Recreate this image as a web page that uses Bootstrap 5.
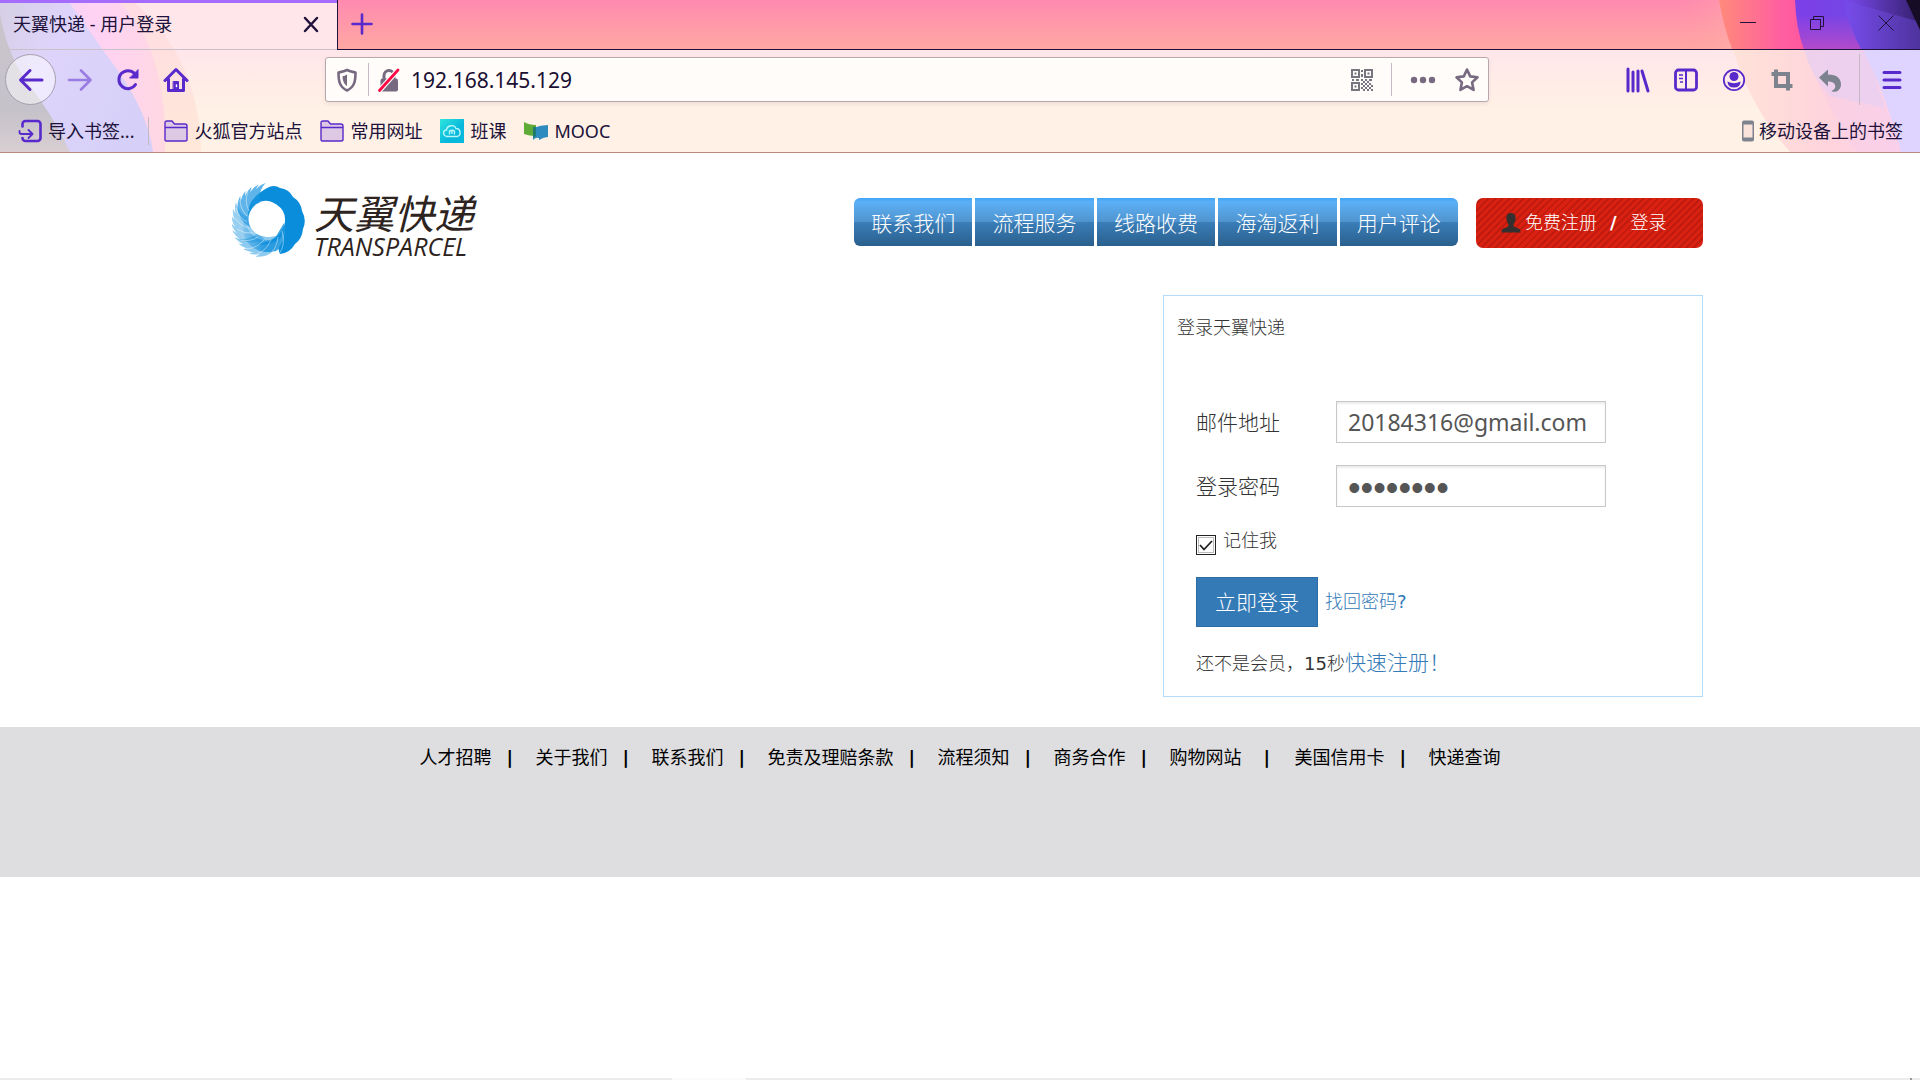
<!DOCTYPE html>
<html lang="zh-CN">
<head>
<meta charset="utf-8">
<meta name="viewport" content="width=device-width, initial-scale=1">
<title>天翼快递 - 用户登录</title>
<link href="https://cdn.jsdelivr.net/npm/bootstrap@5.3.0/dist/css/bootstrap.min.css" rel="stylesheet">
<style>
body{font-family:"DejaVu Sans","Noto Sans CJK SC",sans-serif;font-size:18px;line-height:26px;color:#333;background:#fff}
a{text-decoration:none}
svg{display:block;flex:none}
/* browser chrome */
.browser{font-family:"Noto Sans","Noto Sans CJK SC",sans-serif;color:#20123a;background:linear-gradient(#ffe6ea 50px,#fff1e5 110px);border-bottom:1px solid #b98a7c;overflow:hidden}
.browser button{background:none;border:0;padding:0;color:#592acb}
.browser a{color:#20123a}
.theme-left{left:0;top:0}
.theme-right{right:0;top:0}
.tab-row{height:50px}
.tab-strip{background:linear-gradient(#ff8ab0,#ffa8a2);border-bottom:1px solid #20123a;border-left:1px solid #20123a}
.tab-active{width:337px;border-top:3px solid #a66cff;border-bottom:1px solid #c9c0c9;padding:0 17px 4px 13px}
.btn-new{width:50px;height:48px}
.win-btn{width:69px}
.browser .win-btn,.browser .tab-close{color:#20123a}
.tool-row{height:59px}
.tool-left{width:325px;padding-left:5px}
.tool-right{width:431px;padding-right:4px}
.tool-btn{width:48px;height:48px;display:flex;align-items:center;justify-content:center}
.browser .btn-back{width:51px;height:51px;border:1px solid #a79fae;border-radius:50%;background:rgba(255,255,255,.5);display:flex;align-items:center;justify-content:center}
.url-bar{height:45px;background:#fffcfa;border:1px solid #b6a8ae;border-radius:3px;box-shadow:0 2px 4px rgba(0,0,0,.07);padding:0 8px 0 10px}
.url-bar input{font-size:21px;line-height:28px;border:0;background:none;padding:0 0 0 2px;color:#1a0f33;outline:0;min-width:0}
.v-line{width:1px;background:#c4b9c5}
.mark-row{height:43px;padding:0 17px 0 18px}
.mark-row a{display:flex;align-items:center;gap:6px}
/* site */
.site{max-width:1486px;width:100%}
.site-head{padding:30px 0 36px 15px}
.site-logo{gap:8px;height:76px;padding-top:8px;color:#2d2320}
.site-logo svg{margin-top:-8px}
.logo-cn{font:italic 400 40px/42px "Noto Sans CJK SC",sans-serif}
.logo-en{font:italic 500 25px/26px "Open Sans",sans-serif}
.site-nav{padding-top:15px}
.nav-group{gap:3px;width:604px}
.nav-tile{flex:1;height:48px;font-size:21px;line-height:52px;text-align:center;color:#fff;background:linear-gradient(#3fa5f8,#5cb0f7 8%,#5094ce 49%,#3a7db8 51%,#2a608d);font-weight:300}
.nav-tile:first-child{border-radius:6px 0 0 6px}
.nav-tile:last-child{border-radius:0 6px 6px 0}
.user-box{width:227px;height:50px;margin-left:18px;padding-left:25px;border-radius:7px;background:repeating-linear-gradient(135deg,#da2010 0 3px,#bf1b0e 3px 5px);color:#fff;font-weight:300}
.user-box a{color:#fff}
.user-sep{padding:0 14px 0 13px;font-weight:700}
.login-panel{width:540px;border:1px solid #b4dcfa}
.login-title{font-size:18px;line-height:26px;font-weight:300;padding:19px 13px 0;margin:0 0 60px}
.login-form{padding:0 32px 18px;font-weight:300}
.field-label{width:140px;font-size:21px;line-height:28px;padding-top:2px}
.field-box{width:270px;height:42px;border:1px solid #c8c8c8;border-radius:0;box-shadow:inset 0 2px 2px rgba(0,0,0,.08);padding:0 11px;color:#555}
.field-mail{font-family:"Noto Sans",sans-serif;font-size:23px}
.field-pass{font-family:"Liberation Sans",sans-serif;font-size:36px;line-height:36px;padding-top:4px}
.row-gap{margin-bottom:22px}
.remember{height:24px;margin:24px 0 22px;gap:7px}
.remember label{line-height:20px}
.remember input{appearance:none;width:20px;height:20px;margin:0;border:1px solid #222;align-self:end;background:url("data:image/svg+xml,%3Csvg xmlns='http://www.w3.org/2000/svg' viewBox='0 0 18 18'%3E%3Crect x='1.5' y='1.5' width='15' height='15' fill='none' stroke='%23777' stroke-dasharray='1 1'/%3E%3Cpath d='M3 9l4 4.500 8-8.500' fill='none' stroke='%23222' stroke-width='1.800'/%3E%3C/svg%3E") center/100% 100%}
.btn-login{width:122px;height:50px;border:1px solid #2e6da4;border-radius:0;background:#337ab7;color:#fff;font-size:21px;font-weight:300;padding:2px 0 0}
.site a.blue-link{color:#337ab7}
.quick{line-height:28px}
.quick a{font-size:21px}
.site-foot{height:150px;margin-top:30px;padding-top:18px;background:#dedee0}
.site-foot a{color:#000}
.foot-sep{width:44px;padding-left:15px;color:#000;font-weight:700}
.foot-wide{padding-left:22px;width:53px}
.edge-bar{height:2px;background:#ececec}
.edge-gap{width:74px;background:#fbfbfb}
.edge-tick{width:2px;background:#999}
</style>
<script src="https://cdn.jsdelivr.net/npm/bootstrap@5.3.0/dist/js/bootstrap.bundle.min.js"></script>
</head>
<body class="d-flex flex-column min-vh-100">
<header class="browser position-relative">
  <div class="tab-row d-flex position-relative">
    <div class="flex-shrink-0" style="width:337px"></div>
    <div class="tab-strip flex-grow-1"></div>
  </div>
  <svg class="theme-left position-absolute" width="210" height="152" viewBox="0 0 210 152" aria-hidden="true">
    <defs>
      <linearGradient id="gl" x1="0" y1="0" x2="0" y2="1"><stop offset="0" stop-color="#cbc5cd"/><stop offset=".7" stop-color="#c5c2c9"/><stop offset="1" stop-color="#d9cfd3"/></linearGradient>
      <linearGradient id="lv" x1="0" y1="0" x2="1" y2=".5"><stop offset="0" stop-color="#d5cfe4"/><stop offset=".4" stop-color="#ded4fb"/><stop offset="1" stop-color="#d6d0f8"/></linearGradient>
      <linearGradient id="pk" x1="0" y1="0" x2="1" y2="0"><stop offset="0" stop-color="#ecd2f4"/><stop offset=".6" stop-color="#ffd2f3"/><stop offset="1" stop-color="#ffd8e2"/></linearGradient>
      <linearGradient id="pc" x1="0" y1="0" x2="0" y2="1"><stop offset="0" stop-color="#ffdce2"/><stop offset="1" stop-color="#ffe8d8"/></linearGradient>
    </defs>
    <path d="M0 3H135Q200 60 201 152H0z" fill="url(#pc)"/>
    <path d="M0 3H120Q168 50 165 152H0z" fill="url(#pk)"/>
    <path d="M0 3H70L105 53Q148 108 153 152H0z" fill="url(#lv)"/>
    <path d="M0 14Q8 58 30 86T70 152H0z" fill="url(#gl)"/>
  </svg>
  <svg class="theme-right position-absolute" width="240" height="152" viewBox="0 0 240 152" aria-hidden="true">
    <defs>
      <linearGradient id="r1"><stop offset="0" stop-color="#ff8a7a"/><stop offset=".3" stop-color="#ff60a0"/><stop offset=".6" stop-color="#ff4a9c"/></linearGradient>
      <linearGradient id="r2"><stop offset="0" stop-color="#7d3fe8"/><stop offset=".45" stop-color="#7446e4"/><stop offset="1" stop-color="#35206c"/></linearGradient>
      <linearGradient id="r3" x1="0" y1="0" x2="0" y2="1"><stop offset=".3" stop-color="#b24acc" stop-opacity="0"/><stop offset="1" stop-color="#b24acc"/></linearGradient>
      <linearGradient id="r4"><stop offset="0" stop-color="#ffe2d8"/><stop offset=".5" stop-color="#ffd4dc"/><stop offset="1" stop-color="#fcd0ee"/></linearGradient>
      <linearGradient id="r5"><stop offset="0" stop-color="#ff9aa4" stop-opacity="0"/><stop offset="1" stop-color="#ffb0a8"/></linearGradient>
    </defs>
    <path d="M0 0H45L56 49H0z" fill="url(#r5)" opacity=".5"/>
    <path d="M39 0Q44 28 52 49H240V0z" fill="url(#r1)"/>
    <path d="M115 0Q116 28 124 49H240V0z" fill="url(#r2)"/>
    <path d="M115 0Q116 28 124 49H181Q171 30 163 0z" fill="url(#r3)"/>
    <path d="M163 0Q168 30 181 49H240V22z" fill="#7550e8" opacity=".4"/>
    <path d="M226 0L240 30V0z" fill="#160c26"/>
    <path d="M53 50Q72 110 110 152H240V50z" fill="url(#r4)"/>
    <path d="M124 50Q145 105 176 152H221L186 50z" fill="#f4cdec" opacity=".4"/>
    <path d="M124 50Q132 78 150 96L205 108L186 50z" fill="#e0cff8" opacity=".5"/>
    <path d="M183 50Q206 95 221 152H240V50z" fill="#dfd4ff"/>
    <path d="M0 49.500H240" stroke="#20123a"/>
  </svg>
  <div class="position-absolute top-0 start-0 w-100 tab-row d-flex">
    <div class="tab-active d-flex align-items-center flex-shrink-0">
      <a href="#" class="flex-grow-1">天翼快递 - 用户登录</a>
      <button type="button" class="tab-close" aria-label="关闭标签页"><svg width="18" height="18" viewBox="0 0 18 18" fill="none" stroke="currentColor" stroke-width="2.500" stroke-linecap="round"><path d="M3 3l12 13M15 3L3 16"/></svg></button>
    </div>
    <button type="button" class="btn-new d-flex align-items-center justify-content-center" aria-label="新标签页"><svg width="22" height="22" viewBox="0 0 22 22" stroke="currentColor" stroke-width="2.600" stroke-linecap="round"><path d="M11 1.500v19M1.500 11h19"/></svg></button>
    <div class="ms-auto d-flex h-100 pb-1">
      <button type="button" class="win-btn d-flex align-items-center justify-content-center" aria-label="最小化"><svg width="16" height="16" viewBox="0 0 16 16" stroke="currentColor"><path d="M0 7.500h16"/></svg></button>
      <button type="button" class="win-btn d-flex align-items-center justify-content-center" aria-label="还原"><svg width="16" height="16" viewBox="0 0 16 16" fill="none" stroke="currentColor"><path d="M1.500 4.500h10v10h-10zM4.500 4.500v-3h10v10h-3"/></svg></button>
      <button type="button" class="win-btn d-flex align-items-center justify-content-center" aria-label="关闭"><svg width="16" height="16" viewBox="0 0 16 16" stroke="currentColor"><path d="M.5.500l15 15M15.500.500l-15 15"/></svg></button>
    </div>
  </div>
  <div class="tool-row d-flex align-items-center position-relative">
    <div class="tool-left d-flex align-items-center flex-shrink-0">
      <button type="button" class="btn-back" aria-label="后退"><svg width="26" height="24" viewBox="0 0 26 24" fill="none" stroke="currentColor" stroke-width="3" stroke-linecap="round" stroke-linejoin="round"><path d="M24 12H3M12 2.500L2.500 12l9.500 9.500"/></svg></button>
      <button type="button" class="tool-btn opacity-50" aria-label="前进"><svg width="26" height="24" viewBox="0 0 26 24" fill="none" stroke="currentColor" stroke-width="2.600" stroke-linecap="round" stroke-linejoin="round"><path d="M2 12h21M14 2.500L23.500 12 14 21.500"/></svg></button>
      <button type="button" class="tool-btn" aria-label="刷新"><svg width="24" height="24" viewBox="0 0 24 24" fill="none" stroke="currentColor" stroke-width="3" stroke-linecap="round"><path d="M19.500 16.500A9 9 0 1 1 18.500 5.500"/><path d="M22 2v8h-8z" fill="currentColor" stroke-width="1" stroke-linejoin="round"/></svg></button>
      <button type="button" class="tool-btn" aria-label="主页"><svg width="26" height="26" viewBox="0 0 26 26" fill="none" stroke="currentColor" stroke-width="3" stroke-linecap="round" stroke-linejoin="round"><path d="M2 13.500L13 2.500l11 11M5.500 12v11.500h15V12"/><path d="M10.500 14.500h5v8.500h-5z" fill="currentColor" stroke-width="1"/><path d="M13.500 18v1.500" stroke="#fff" stroke-width="1.500"/></svg></button>
    </div>
    <div class="url-bar d-flex align-items-center flex-grow-1">
      <svg width="22" height="24" viewBox="0 0 22 24" fill="none" stroke="#77697f" stroke-width="2.600" stroke-linejoin="round"><path d="M11 2C8 3.500 5 4 2.500 4.500 2.500 13 3.500 19 11 22.500 18.500 19 19.500 13 19.500 4.500 17 4 14 3.500 11 2z"/><path d="M11 6.500C9.500 7.500 8 8 6.500 8.200 6.800 12.500 7.500 15.500 11 18z" fill="#77697f" stroke="none"/></svg>
      <div class="v-line me-2 h-75" style="margin-left:10px"></div>
      <svg width="24" height="24" viewBox="0 0 22 24"><path d="M6 11V7.500a5 5 0 0 1 10 0V11" fill="none" stroke="#77697f" stroke-width="3"/><rect x="2.500" y="10.500" width="17.500" height="13" rx="2" fill="#77697f"/><path d="M2 22L20 2" stroke="#fff" stroke-width="5"/><path d="M1.500 22.500L20 2" stroke="#ff0a45" stroke-width="2.800" stroke-linecap="round"/></svg>
      <input class="flex-grow-1 ms-2" type="text" aria-label="网址" value="192.168.145.129">
      <button type="button" aria-label="二维码"><svg width="22" height="22" viewBox="0 0 22 22" fill="#77757f"><path fill-rule="evenodd" d="M0 0h9v9H0zM2 2v5h5V2zM13 0h9v9h-9zM15 2v5h5V2zM0 13h9v9H0zM2 15v5h5v-5z"/><path d="M3.500 3.500h2v2h-2zM16.500 3.500h2v2h-2zM3.500 16.500h2v2h-2zM10 1h2v2h-2zM10 5h2v3h-2zM1 10h2v2H1zM5 10h3v2H5zM10 10h2v2h-2zM14 10h2v2h-2zM18 10h3v2h-3zM12 12h2v2h-2zM16 12h2v2h-2zM10 14h2v2h-2zM14 14h2v2h-2zM18 14h2v2h-2zM12 16h2v2h-2zM16 16h2v2h-2zM20 16h2v2h-2zM10 18h2v2h-2zM14 18h2v2h-2zM18 18h2v2h-2zM12 20h2v2h-2zM16 20h2v2h-2zM20 20h2v2h-2z"/></svg></button>
      <div class="v-line h-75" style="margin:0 18px"></div>
      <button type="button" style="margin-right:18px" aria-label="页面操作"><svg width="26" height="8" viewBox="0 0 26 8" fill="#77697f"><circle cx="4" cy="4" r="3.200"/><circle cx="13" cy="4" r="3.200"/><circle cx="22" cy="4" r="3.200"/></svg></button>
      <button type="button" aria-label="收藏"><svg width="26" height="26" viewBox="0 0 26 26" fill="none" stroke="#77697f" stroke-width="2.600" stroke-linejoin="round"><path d="M13 2.500l3.200 6.900 7.300.900-5.400 5.100 1.500 7.500-6.600-3.700-6.600 3.700 1.500-7.500-5.400-5.100 7.300-.9z"/></svg></button>
    </div>
    <div class="tool-right d-flex align-items-center justify-content-end flex-shrink-0">
      <button type="button" class="tool-btn" aria-label="书库"><svg width="24" height="26" viewBox="0 0 24 26" stroke="currentColor" stroke-width="3" stroke-linecap="round"><path d="M2 2v22M7 5v19M12 4v20M16 4l6 20"/></svg></button>
      <button type="button" class="tool-btn" aria-label="侧栏"><svg width="24" height="24" viewBox="0 0 24 24" fill="none" stroke="currentColor" stroke-width="2.800"><rect x="1.500" y="2" width="21" height="20" rx="3"/><path d="M12 2v20" stroke-width="2"/><path d="M5 7h4M5 10.500h4M6 14h3" stroke-width="1.600"/></svg></button>
      <button type="button" class="tool-btn" aria-label="账户"><svg width="24" height="24" viewBox="0 0 24 24" fill="currentColor"><circle cx="12" cy="12" r="10.200" fill="none" stroke="currentColor" stroke-width="1.800"/><circle cx="12" cy="8.500" r="4.500"/><path d="M5.500 13.500q6.500 3.500 13 0 0 6-6.500 6t-6.500-6z"/></svg></button>
      <button type="button" class="tool-btn" aria-label="截图"><svg width="24" height="24" viewBox="0 0 24 24" fill="none" stroke="#7d838e" stroke-width="4"><path d="M1.500 6H18v16.500M6 1.500V18h16.500"/></svg></button>
      <button type="button" class="tool-btn" aria-label="撤销"><svg width="24" height="24" viewBox="0 0 24 24" fill="#7d838e"><path d="M1 9.500L10 1.500v5c9 0 13 4 13 10 0 3-1.500 5.500-4.500 7-2.500.8-5 0-5-.5 6-2.500 5-9.500-3.500-9.500v5z"/></svg></button>
      <div class="v-line" style="height:51px;margin:0 8px 0 5px"></div>
      <button type="button" class="tool-btn" aria-label="菜单"><svg width="20" height="20" viewBox="0 0 20 20" stroke="currentColor" stroke-width="3" stroke-linecap="round"><path d="M2 2.500h16M2 10h16M2 17.500h16"/></svg></button>
    </div>
  </div>
  <nav class="mark-row d-flex align-items-center position-relative" aria-label="书签">
    <a href="#"><svg width="24" height="24" viewBox="0 0 24 24" fill="none" stroke="#592acb" stroke-width="2.600" stroke-linecap="round" stroke-linejoin="round"><path d="M4.500 7.500V5a3 3 0 0 1 3-3H19.500a3 3 0 0 1 3 3v14a3 3 0 0 1-3 3H7.500a3 3 0 0 1-3-3"/><path d="M1.500 12v1a2 2 0 0 0 2 2h10M10.500 11l4 4-4 4" stroke-width="1.900"/></svg>导入书签...</a>
    <div class="v-line" style="height:28px;margin:0 15px 0 14px"></div>
    <div class="d-flex" style="gap:18px">
      <a href="#"><svg width="24" height="24" viewBox="0 0 24 24" fill="#ddc9e4" stroke="#592acb" stroke-width="1.400" stroke-linejoin="round"><path d="M1 20.500V4q0-2 2-2h5l2.500 3H21q2 0 2 2v13.500q0 1.500-2 1.500H3q-2 0-2-1.500zM1 8.500h22"/></svg>火狐官方站点</a>
      <a href="#"><svg width="24" height="24" viewBox="0 0 24 24" fill="#ddc9e4" stroke="#592acb" stroke-width="1.400" stroke-linejoin="round"><path d="M1 20.500V4q0-2 2-2h5l2.500 3H21q2 0 2 2v13.500q0 1.500-2 1.500H3q-2 0-2-1.500zM1 8.500h22"/></svg>常用网址</a>
      <a href="#"><svg width="24" height="24" viewBox="0 0 24 24"><defs><linearGradient id="ck" x1="0" y1="0" x2="1" y2="1"><stop stop-color="#2fe6dd"/><stop offset=".6" stop-color="#08b7dc"/></linearGradient></defs><path d="M0 0h24v24H0z" fill="url(#ck)"/><path d="M7 17.500c-5-1-4-6.500-.5-6.500C7 6 14.500 5 16 9.500c5 0 5.500 7 1 8zM9.500 11.500v4M9.500 12q3-1.500 5 0v3.500M12 12v3" fill="none" stroke="#b9f7fb" stroke-width="1.400"/></svg>班课</a>
      <a href="#"><svg width="24" height="24" viewBox="0 0 24 24"><path d="M0 3q5 3 12 3v11Q5 17 0 15z" fill="#5fab38"/><path d="M24 6q-7 0-15 3v12q3-3 6-2v2q5-3 9-3z" fill="#2e8bc0"/><path d="M9 8h3v9q-2 1-3 2z" fill="#207a72"/></svg>MOOC</a>
    </div>
    <a href="#" class="ms-auto"><svg width="14" height="24" viewBox="0 0 14 24"><rect x="1" y="1.500" width="12" height="21" rx="2" fill="#7d838e"/><path d="M2.500 5.500h9v13h-9z" fill="#f9e3da"/></svg><span style="margin-left:-2px">移动设备上的书签</span></a>
  </nav>
</header>

<main class="site mx-auto">
  <div class="site-head d-flex align-items-start">
    <a href="#" class="site-logo d-flex align-items-start">
      <svg width="74" height="76" viewBox="0 0 74 76" aria-hidden="true">
        <defs>
          <linearGradient id="sw" x1="0" y1="0" x2="1" y2="0"><stop offset="0" stop-color="#0a8ddb" stop-opacity=".2"/><stop offset=".5" stop-color="#0a8ddb"/></linearGradient>
          <path id="pt" d="M27 22C31 9 43 1 56 5 47 7 42 12 39 22z"/>
          <g id="fan"><use href="#pt"/><use href="#pt" transform="rotate(-11 37 38)"/><use href="#pt" transform="rotate(-22 37 38)"/><use href="#pt" transform="rotate(-33 37 38)"/><use href="#pt" transform="rotate(-44 37 38)"/></g>
        </defs>
        <path d="M35 5Q42 1 48 5 57 6 61 14 69 19 70 28 75 37 71 46 70 56 63 61 58 70 48 71 45 66 49 61 54 53 52 44 56 29 45 22 34 14 24 21 18 26 17 36 12 18 35 5z" fill="#0a8ddb"/>
        <path d="M14 31Q12 50 27 56T52 44Q58 60 44 68 26 72 16 60 7 46 14 31z" fill="url(#sw)" opacity=".8"/>
        <g fill="#1c96e0">
          <use href="#fan" opacity=".7" transform="rotate(-35 37 38)"/>
          <use href="#fan" opacity=".45" transform="rotate(-90 37 38)"/>
          <use href="#fan" opacity=".5" transform="rotate(-145 37 38)"/>
        </g>
        <circle cx="34" cy="36" r="17.500" fill="#fff"/>
        <path d="M52 40Q55 52 44 58 36 63 24 61 42 60 46 50z" fill="#0a8ddb" opacity=".8"/>
        <g stroke="#fff" fill="none" stroke-width=".8" opacity=".55"><path d="M17 28Q12 18 16 9M15 33Q8 25 8 17M15 39Q6 34 4 25M17 45Q8 43 3 35M21 50Q12 51 5 46M26 54Q18 59 9 57M32 57Q25 65 15 66M39 57Q34 68 25 71M46 54Q45 66 36 73M50 48Q54 62 47 71"/></g>
      </svg>
      <span class="d-flex flex-column"><span class="logo-cn">天翼快递</span><span class="logo-en">TRANSPARCEL</span></span>
    </a>
    <div class="site-nav d-flex align-items-start ms-auto">
      <nav class="nav-group d-flex">
        <a class="nav-tile" href="#">联系我们</a><a class="nav-tile" href="#">流程服务</a><a class="nav-tile" href="#">线路收费</a><a class="nav-tile" href="#">海淘返利</a><a class="nav-tile" href="#">用户评论</a>
      </nav>
      <div class="user-box d-flex align-items-center">
        <svg width="20" height="20" viewBox="0 0 20 20" fill="#33302f" class="me-1"><path d="M10 0c4 0 5 3 4.500 6.500C14.200 9 13 10 12.500 11.500c0 2 1 2.500 3.500 3.500 3 1 3.500 1.500 3.500 4.500H.500c0-3 .5-3.500 3.500-4.500 2.500-1 3.500-1.500 3.500-3.500C7 10 5.800 9 5.500 6.500 5 3 6 0 10 0z"/></svg>
        <a href="#">免费注册</a><span class="user-sep">/</span><a href="#">登录</a>
      </div>
    </div>
  </div>

  <section class="login-panel ms-auto">
    <h1 class="login-title">登录天翼快递</h1>
    <form class="login-form">
      <div class="d-flex align-items-center row-gap">
        <label class="field-label" for="mail">邮件地址</label>
        <input class="form-control field-box field-mail" id="mail" type="text" value="20184316@gmail.com">
      </div>
      <div class="d-flex align-items-center">
        <label class="field-label" for="pass">登录密码</label>
        <input class="form-control field-box field-pass" id="pass" type="password" value="20184316">
      </div>
      <div class="remember d-flex">
        <input type="checkbox" id="keep" checked>
        <label for="keep">记住我</label>
      </div>
      <div class="d-flex align-items-center row-gap" style="gap:7px">
        <button class="btn-login" type="button">立即登录</button>
        <a class="blue-link" href="#">找回密码<b>?</b></a>
      </div>
      <div class="quick">还不是会员，<b>15</b>秒<a class="blue-link" href="#">快速注册！</a></div>
    </form>
  </section>
</main>

<footer class="site-foot d-flex justify-content-center">
  <a href="#">人才招聘</a><span class="foot-sep">|</span>
  <a href="#">关于我们</a><span class="foot-sep">|</span>
  <a href="#">联系我们</a><span class="foot-sep">|</span>
  <a href="#">免责及理赔条款</a><span class="foot-sep">|</span>
  <a href="#">流程须知</a><span class="foot-sep">|</span>
  <a href="#">商务合作</a><span class="foot-sep">|</span>
  <a href="#">购物网站</a><span class="foot-sep foot-wide">|</span>
  <a href="#">美国信用卡</a><span class="foot-sep">|</span>
  <a href="#">快递查询</a>
</footer>

<div class="edge-bar mt-auto d-flex">
  <div class="w-25"></div><div style="width:10%"></div><div class="edge-gap"></div><div class="edge-tick ms-auto me-2"></div>
</div>
</body>
</html>
